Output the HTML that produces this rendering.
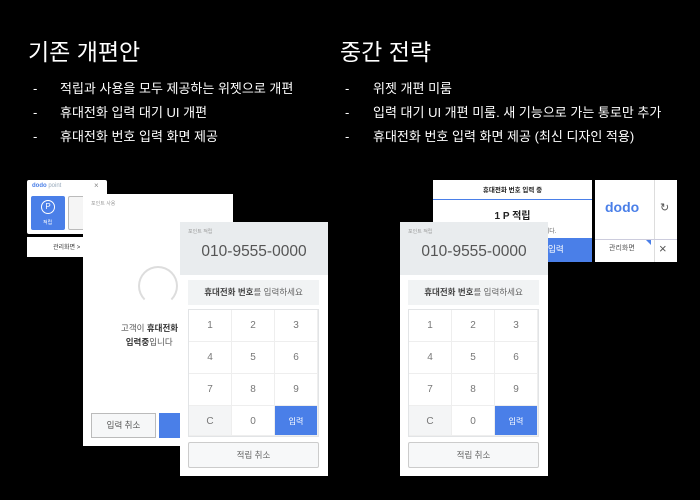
<!DOCTYPE html><html><head><meta charset="utf-8"><style>
*{margin:0;padding:0;box-sizing:border-box}
body{width:700px;height:500px;background:#000;position:relative;overflow:hidden;font-family:"Liberation Sans","Noto Sans CJK KR",sans-serif;color:#fff}
.a{position:absolute}
h1{position:absolute;font-size:23px;font-weight:400;top:33px}
.li{position:absolute;font-size:13px;line-height:16px}
.kp{position:absolute;width:148px;height:254px;background:#fff}
.kp .hd{position:absolute;left:0;top:0;width:148px;height:53px;background:#e9ecee}
.kp .t{position:absolute;left:8px;top:6px;font-size:5px;color:#999}
.kp .num{position:absolute;left:0;width:148px;top:21px;text-align:center;font-size:15.5px;color:#555}
.kp .pr{position:absolute;left:8px;top:58px;width:131px;height:25px;background:#f1f3f4;font-size:8.5px;color:#666;text-align:center;line-height:25px}
.kp .pr b{color:#444}
.kp .g{position:absolute;left:8px;top:87px;width:131px;height:128px;border:1px solid #e2e4e6;display:grid;grid-template-columns:43px 43px 43px;grid-template-rows:32px 32px 32px 30px;gap:0}
.kp .g div{border-right:1px solid #eee;border-bottom:1px solid #eee;text-align:center;font-size:10px;color:#777;line-height:31px}
.kp .c{background:#f4f5f6}.kp .b{background:#4a7fe8;color:#fff!important;font-size:8px!important}
.kp .cn{position:absolute;left:8px;top:220px;width:131px;height:26px;border:1px solid #ccc;border-radius:2px;background:#f7f8f9;font-size:8.5px;color:#666;text-align:center;line-height:24px}
</style></head><body>
<h1 style="left:28px">기존 개편안</h1>
<h1 style="left:340px">중간 전략</h1>
<div class="li" style="left:33px;top:81px">-</div><div class="li" style="left:60px;top:81px">적립과 사용을 모두 제공하는 위젯으로 개편</div>
<div class="li" style="left:33px;top:105px">-</div><div class="li" style="left:60px;top:105px">휴대전화 입력 대기 UI 개편</div>
<div class="li" style="left:33px;top:129px">-</div><div class="li" style="left:60px;top:129px">휴대전화 번호 입력 화면 제공</div>
<div class="li" style="left:345px;top:81px">-</div><div class="li" style="left:373px;top:81px">위젯 개편 미룸</div>
<div class="li" style="left:345px;top:105px">-</div><div class="li" style="left:373px;top:105px">입력 대기 UI 개편 미룸. 새 기능으로 가는 통로만 추가</div>
<div class="li" style="left:345px;top:129px">-</div><div class="li" style="left:373px;top:129px">휴대전화 번호 입력 화면 제공 (최신 디자인 적용)</div>

<div class="a" style="left:27px;top:180px;width:80px;height:54px;background:#fff;border-radius:2px"></div>
<div class="a" style="left:32px;top:183px;font-size:6px;color:#4a7fe8;font-weight:700">dodo <span style="color:#9ab;font-weight:400">point</span></div>
<div class="a" style="left:94px;top:181px;font-size:8px;color:#888">×</div>
<div class="a" style="left:31px;top:196px;width:34px;height:34px;background:#4a7fe8;border-radius:2px"></div>
<div class="a" style="left:41px;top:200px;width:14px;height:14px;border:1.3px solid #fff;border-radius:50%;font-size:8px;text-align:center;line-height:12px;color:#fff">P</div>
<div class="a" style="left:43px;top:219px;font-size:5px;color:#fff">적립</div>
<div class="a" style="left:68px;top:196px;width:20px;height:34px;border:1px solid #bbb;border-radius:2px;background:#f5f5f5"></div>
<div class="a" style="left:27px;top:237px;width:60px;height:20px;background:#fff"></div>
<div class="a" style="left:53px;top:242px;font-size:6px;color:#333">관리화면 &gt;</div>

<div class="a" style="left:83px;top:194px;width:150px;height:252px;background:#fff"></div>
<div class="a" style="left:91px;top:200px;font-size:5px;color:#999">포인트 사용</div>
<div class="a" style="left:138px;top:266px;width:40px;height:40px;border:2px solid #ddd;border-bottom-color:transparent;border-radius:50%"></div>
<div class="a" style="left:121px;top:321px;font-size:8.5px;color:#555;line-height:14px">고객이 <b style="color:#333">휴대전화</b><br>&nbsp;&nbsp;<b style="color:#333">입력중</b>입니다</div>
<div class="a" style="left:91px;top:413px;width:65px;height:25px;border:1px solid #bbb;background:#f6f7f8;font-size:8.5px;color:#555;text-align:center;line-height:23px">입력 취소</div>
<div class="a" style="left:159px;top:413px;width:30px;height:25px;background:#4a7fe8"></div>

<div class="kp" style="left:180px;top:222px">
<div class="hd"></div><div class="t">포인트 적립</div><div class="num">010-9555-0000</div>
<div class="pr"><b>휴대전화 번호</b>를 입력하세요</div>
<div class="g"><div>1</div><div>2</div><div>3</div><div>4</div><div>5</div><div>6</div><div>7</div><div>8</div><div>9</div><div class="c">C</div><div>0</div><div class="b">입력</div></div>
<div class="cn">적립 취소</div></div>

<div class="a" style="left:433px;top:180px;width:159px;height:82px;background:#fff"></div>
<div class="a" style="left:433px;top:184px;width:159px;text-align:center;font-size:6.5px;font-weight:700;color:#222">휴대전화 번호 입력 중</div>
<div class="a" style="left:433px;top:199px;width:159px;height:1px;background:#4a7fe8"></div>
<div class="a" style="left:433px;top:207px;width:159px;text-align:center;font-size:10px;font-weight:700;color:#222">1 P 적립</div>
<div class="a" style="left:520px;top:226px;font-size:6px;color:#666">입력 중입니다.</div>
<div class="a" style="left:433px;top:238px;width:159px;height:24px;background:#4a7fe8"></div>
<div class="a" style="left:530px;top:243px;font-size:8.5px;color:#fff">직접 입력</div>
<div class="a" style="left:595px;top:180px;width:82px;height:82px;background:#fff"></div>
<div class="a" style="left:654px;top:180px;width:1px;height:82px;background:#ddd"></div>
<div class="a" style="left:595px;top:239px;width:82px;height:1px;background:#ccd"></div>
<div class="a" style="left:605px;top:199px;font-size:14px;font-weight:700;color:#4a7fe8">dodo</div>
<div class="a" style="left:660px;top:201px;font-size:11px;color:#555">↻</div>
<div class="a" style="left:609px;top:243px;font-size:7px;color:#555">관리화면</div>
<div class="a" style="left:646px;top:240px;width:0;height:0;border-left:5px solid transparent;border-top:5px solid #4a7fe8"></div>
<div class="a" style="left:659px;top:241px;font-size:13px;color:#555">×</div>

<div class="kp" style="left:400px;top:222px">
<div class="hd"></div><div class="t">포인트 적립</div><div class="num">010-9555-0000</div>
<div class="pr"><b>휴대전화 번호</b>를 입력하세요</div>
<div class="g"><div>1</div><div>2</div><div>3</div><div>4</div><div>5</div><div>6</div><div>7</div><div>8</div><div>9</div><div class="c">C</div><div>0</div><div class="b">입력</div></div>
<div class="cn">적립 취소</div></div>
</body></html>
